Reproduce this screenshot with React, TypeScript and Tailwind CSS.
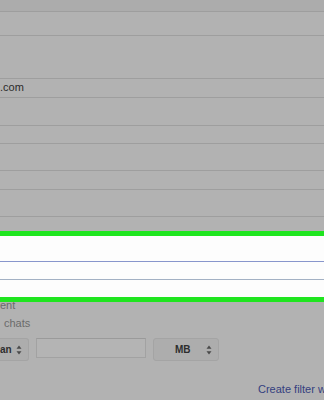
import React from 'react'

// Dimmed Gmail "create filter" dialog, with a green highlight round the two
// text fields. Everything left of x=0 is cropped in the source, so some text
// is cut (".com", "ent", "an").

function Arrows({ className = '' }: { className?: string }) {
  return (
    <svg width="6" height="10" viewBox="0 0 6 10" className={className} aria-hidden="true">
      <path d="M3 0.5 L5.5 3.8 L0.5 3.8 Z" fill="#4a4a4a" />
      <path d="M3 9.5 L5.5 6.2 L0.5 6.2 Z" fill="#4a4a4a" />
    </svg>
  )
}

function Row({ h, children }: { h: string; children?: React.ReactNode }) {
  return (
    <div className={`${h} border-b border-[#9e9e9e] flex items-center`}>
      {children}
    </div>
  )
}

export default function App() {
  return (
    <div
      className="w-[324px] h-[400px] overflow-hidden bg-[#b2b2b2] text-[11px]"
      style={{ fontFamily: '"Liberation Sans", Arial, sans-serif' }}
    >
      <div className="h-[12px] bg-[#acacac] border-b border-[#9e9e9e]" />
      <Row h="h-[24px]" />
      <Row h="h-[43px]" />
      <Row h="h-[19px]">
        <span className="text-[#2b2b2b] text-[11px] leading-none -mt-[1px]">.com</span>
      </Row>
      <Row h="h-[28px]" />
      <Row h="h-[18px]" />
      <Row h="h-[27px]" />
      <Row h="h-[19px]" />
      <Row h="h-[27px]" />
      <div className="h-[14px]" />

      {/* highlighted fields */}
      <div className="border-y-[5px] border-[#1fe51f] bg-[#fdfdfd]">
        <div className="h-[26px] border-b border-[#8896cc]" />
        <div className="h-[18px] border-b border-[#a3b1c4]" />
        <div className="h-[17px]" />
      </div>

      {/* label half hidden under the highlight */}
      <div className="h-[7px] overflow-hidden flex items-end">
        <span className="text-[#6b6b6b] text-[11px] leading-[11px] -mb-[2px]">ent</span>
      </div>

      <div className="mt-[6px] pl-[4px] text-[#6b6b6b] leading-[16px] text-[11px]">chats</div>

      <div className="mt-[7px] flex items-start">
        <div className="w-[29px] h-[23px] bg-[#adadad] border border-l-0 border-[#a4a4a4] rounded-r-[3px] flex items-center justify-between pr-[6px]">
          <span className="text-[#2e2e2e] font-bold text-[10px]">an</span>
          <Arrows />
        </div>
        <div className="ml-[7px] w-[110px] h-[20px] bg-[#b4b4b4] border border-[#a2a2a2] border-t-[#9a9a9a]" />
        <div className="ml-[7px] w-[66px] h-[23px] bg-[#adadad] border border-[#a4a4a4] rounded-[3px] flex items-center pl-[21px] pr-[6px]">
          <span className="text-[#2e2e2e] font-bold text-[10px]">MB</span>
          <Arrows className="ml-auto" />
        </div>
      </div>

      <div className="mt-[20px] pl-[258px] whitespace-nowrap text-[#34407f] text-[11px] leading-[16px]">
        Create filter with this search
      </div>
    </div>
  )
}
